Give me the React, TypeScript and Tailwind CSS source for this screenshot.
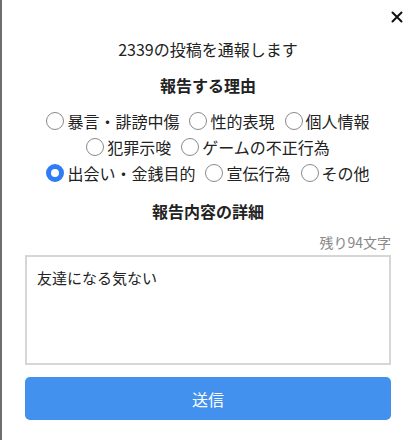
import React, { useState } from 'react';

const REASONS = [
  '暴言・誹謗中傷',
  '性的表現',
  '個人情報',
  '犯罪示唆',
  'ゲームの不正行為',
  '出会い・金銭目的',
  '宣伝行為',
  'その他',
];

const MAX_LENGTH = 102;

const Radio: React.FC<{ label: string; checked: boolean; onSelect: () => void }> = ({ label, checked, onSelect }) => (
  <label className="flex items-center cursor-pointer" onClick={onSelect}>
    {checked ? (
      <span className="w-[18px] h-[18px] rounded-full border-[5px] border-[#2f7df6] bg-white box-border" />
    ) : (
      <span className="w-[18px] h-[18px] rounded-full border-[1.5px] border-[#8a8a8a] bg-white box-border" />
    )}
    <span className="ml-[3px]">{label}</span>
  </label>
);

const App: React.FC = () => {
  const [reason, setReason] = useState('出会い・金銭目的');
  const [detail, setDetail] = useState('友達になる気ない');

  return (
    <div
      className="relative w-[415px] h-[440px] bg-white border-l-2 border-[#6e6e6e] text-[#222] overflow-hidden"
      style={{ fontFamily: '"Noto Sans CJK JP", "Noto Sans", sans-serif' }}
    >
      <button className="absolute top-[11px] right-[12px] w-[12px] h-[12px] flex items-center justify-center">
        <svg width="12" height="12" viewBox="0 0 12 12" fill="none" stroke="#111" strokeWidth="2" strokeLinecap="round">
          <path d="M1.5 1.5 L10.5 10.5 M10.5 1.5 L1.5 10.5" />
        </svg>
      </button>

      <div className="pl-[23px] pr-[24px] pt-[37px] flex flex-col">
        <p className="text-center text-[16px] leading-[24px]">2339の投稿を通報します</p>

        <h3 className="mt-3 text-center text-[16px] leading-[24px] font-bold">報告する理由</h3>

        <div className="mt-[11px] flex flex-wrap justify-center gap-x-[10px] text-[16px] leading-[26px]">
          {REASONS.map((r) => (
            <Radio key={r} label={r} checked={reason === r} onSelect={() => setReason(r)} />
          ))}
        </div>

        <h3 className="mt-[13px] text-center text-[16px] leading-[24px] font-bold">報告内容の詳細</h3>

        <p className="mt-[10px] text-right text-[14px] leading-[18px] text-[#888]">
          残り{MAX_LENGTH - detail.length}文字
        </p>

        <textarea
          value={detail}
          onChange={(e) => setDetail(e.target.value)}
          className="mt-1 h-[110px] w-full resize-none border-2 border-[#d6d6d6] px-[10px] py-[10px] text-[15px] leading-[22px] text-[#222] outline-none"
        />

        <button className="mt-3 h-[43px] w-full rounded-[5px] bg-[#4391ee] text-white text-[16px]">
          送信
        </button>
      </div>
    </div>
  );
};

export default App;
